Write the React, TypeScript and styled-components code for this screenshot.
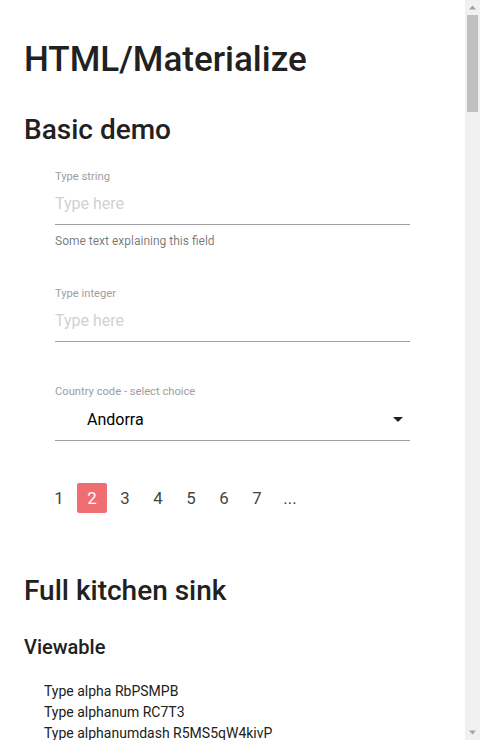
import React from "react";
import styled, { createGlobalStyle } from "styled-components";

const GlobalStyle = createGlobalStyle`
  html, body {
    margin: 0;
    padding: 0;
    background: #fff;
  }
  body {
    font-family: Roboto, "Liberation Sans", sans-serif;
    color: rgba(0, 0, 0, 0.87);
  }
  * {
    box-sizing: border-box;
  }
`;

const pages = ["1", "2", "3", "4", "5", "6", "7", "..."];

const viewable = [
  ["Type alpha", "RbPSMPB"],
  ["Type alphanum", "RC7T3"],
  ["Type alphanumdash", "R5MS5qW4kivP"],
  ["Type integer", "42"],
  ["Type decimal", "3.1415"],
  ["Type email", "someone@example.com"],
  ["Type url", "https://example.com"],
  ["Type date", "2019-06-12"],
  ["Type time", "12:53"],
  ["Country code", "Andorra"],
  ["Type boolean", "Yes"],
  ["Type password", "********"],
];

const editable = [
  "Type alpha",
  "Type alphanum",
  "Type alphanumdash",
  "Type integer",
  "Type decimal",
  "Type email",
  "Type url",
  "Type date",
  "Type time",
  "Type text",
  "Type password",
  "Type phone",
  "Type slug",
  "Type ip address",
  "Type color",
  "Type file",
  "Type json",
  "Type number range",
  "Type comment",
  "Type tags",
  "Type hostname",
  "Type uuid",
  "Type postal code",
  "Type iban",
  "Type currency",
  "Type percent",
  "Type duration",
  "Type latitude",
  "Type longitude",
  "Type timezone",
  "Type locale",
  "Type notes",
  "Type title",
  "Type subtitle",
  "Type summary",
  "Type description",
  "Type keywords",
  "Type author",
  "Type reviewer",
  "Type editor",
  "Type publisher",
  "Type version",
  "Type status",
  "Type priority",
  "Type category",
  "Type reference",
  "Type extra",
];

// the page is drawn with its classic scrollbar, scrolled to the top
const Scrollbar = () => (
  <ScrollRail>
    <ScrollButton viewBox="0 0 15 15">
      <path d="M4 9.5h7L7.5 5.5z" />
    </ScrollButton>
    <ScrollTrack>
      <ScrollThumb />
    </ScrollTrack>
    <ScrollButton viewBox="0 0 15 15">
      <path d="M4 5.5h7L7.5 9.5z" />
    </ScrollButton>
  </ScrollRail>
);

const App = () => {
  return (
    <Page>
      <GlobalStyle />
      <Title>HTML/Materialize</Title>

      <Section>Basic demo</Section>
      <Field $top={24}>
        <Label>Type string</Label>
        <Input placeholder="Type here" />
        <Helper>Some text explaining this field</Helper>
      </Field>
      <Field $top={37}>
        <Label>Type integer</Label>
        <Input placeholder="Type here" />
      </Field>
      <Field $top={43}>
        <Label>Country code - select choice</Label>
        <Select>
          <SelectValue>Andorra</SelectValue>
          <Caret viewBox="0 0 24 24">
            <path d="M7 10l5 5 5-5z" />
          </Caret>
        </Select>
      </Field>

      <Pagination>
        {pages.map((p) => (
          <PageItem key={p} $active={p === "2"}>
            {p}
          </PageItem>
        ))}
      </Pagination>

      <Section $top={62}>Full kitchen sink</Section>
      <SubTitle>Viewable</SubTitle>
      <ViewList>
        {viewable.map(([name, value]) => (
          <ViewRow key={name}>
            {name} {value}
          </ViewRow>
        ))}
      </ViewList>

      <SubTitle>Editable</SubTitle>
      {editable.map((name) => (
        <Field key={name} $top={37}>
          <Label>{name}</Label>
          <Input placeholder="Type here" />
        </Field>
      ))}

      <Scrollbar />
    </Page>
  );
};

const Page = styled.div`
  min-height: 5416px;
  padding: 40px 39px 60px 24px;
`;

const ScrollRail = styled.div`
  position: fixed;
  top: 0;
  right: 0;
  bottom: 0;
  width: 15px;
  display: flex;
  flex-direction: column;
  background: #f1f1f1;
`;

const ScrollButton = styled.svg`
  display: block;
  width: 15px;
  height: 15px;
  flex-shrink: 0;
  fill: #a3a3a3;
`;

const ScrollTrack = styled.div`
  flex: 1;
  padding: 0 2px;
`;

const ScrollThumb = styled.div`
  height: 97px;
  background: #c1c1c1;
`;

const Title = styled.h1`
  margin: 0;
  font-size: 35px;
  line-height: 40px;
  font-weight: 500;
  color: #212121;
`;

const Section = styled.h2<{ $top?: number }>`
  margin: ${({ $top }) => $top ?? 34}px 0 0;
  font-size: 28px;
  line-height: 32px;
  font-weight: 500;
  color: #212121;
`;

const SubTitle = styled.h3`
  margin: 28px 0 0;
  font-size: 20px;
  line-height: 24px;
  font-weight: 500;
  color: #212121;
`;

const Field = styled.div<{ $top: number }>`
  margin: ${({ $top }) => $top}px 0 0 31px;
  width: 355px;
`;

const Label = styled.label`
  display: block;
  font-size: 11.2px;
  line-height: 13px;
  color: #9e9e9e;
`;

const Input = styled.input`
  display: block;
  width: 100%;
  height: 42px;
  margin: 0;
  padding: 0;
  border: none;
  border-bottom: 1px solid #9e9e9e;
  outline: none;
  background: transparent;
  font-family: Roboto, "Liberation Sans", sans-serif;
  font-size: 16px;
  color: rgba(0, 0, 0, 0.87);

  &::placeholder {
    color: #d1d1d1;
  }
`;

const Helper = styled.div`
  margin-top: 7px;
  font-size: 12px;
  line-height: 18px;
  color: rgba(0, 0, 0, 0.54);
`;

const Select = styled.div`
  display: flex;
  align-items: center;
  justify-content: space-between;
  height: 43px;
  padding-left: 32px;
  border-bottom: 1px solid #9e9e9e;
`;

const SelectValue = styled.span`
  font-size: 16px;
  color: #000;
`;

const Caret = styled.svg`
  width: 24px;
  height: 24px;
  fill: rgba(0, 0, 0, 0.87);
`;

const Pagination = styled.ul`
  display: flex;
  gap: 3px;
  margin: 42px 0 0;
  padding: 0 0 0 20px;
  list-style: none;
`;

const PageItem = styled.li<{ $active?: boolean }>`
  width: 30px;
  height: 30px;
  border-radius: 2px;
  text-align: center;
  font-size: 16.8px;
  line-height: 30px;
  color: ${({ $active }) => ($active ? "#fff" : "#444")};
  background: ${({ $active }) => ($active ? "#ee6e73" : "transparent")};
`;

const ViewList = styled.div`
  margin: 22px 0 0;
  padding-left: 20px;
`;

const ViewRow = styled.div`
  font-size: 14px;
  line-height: 21px;
  color: #212121;
`;

export default App;
